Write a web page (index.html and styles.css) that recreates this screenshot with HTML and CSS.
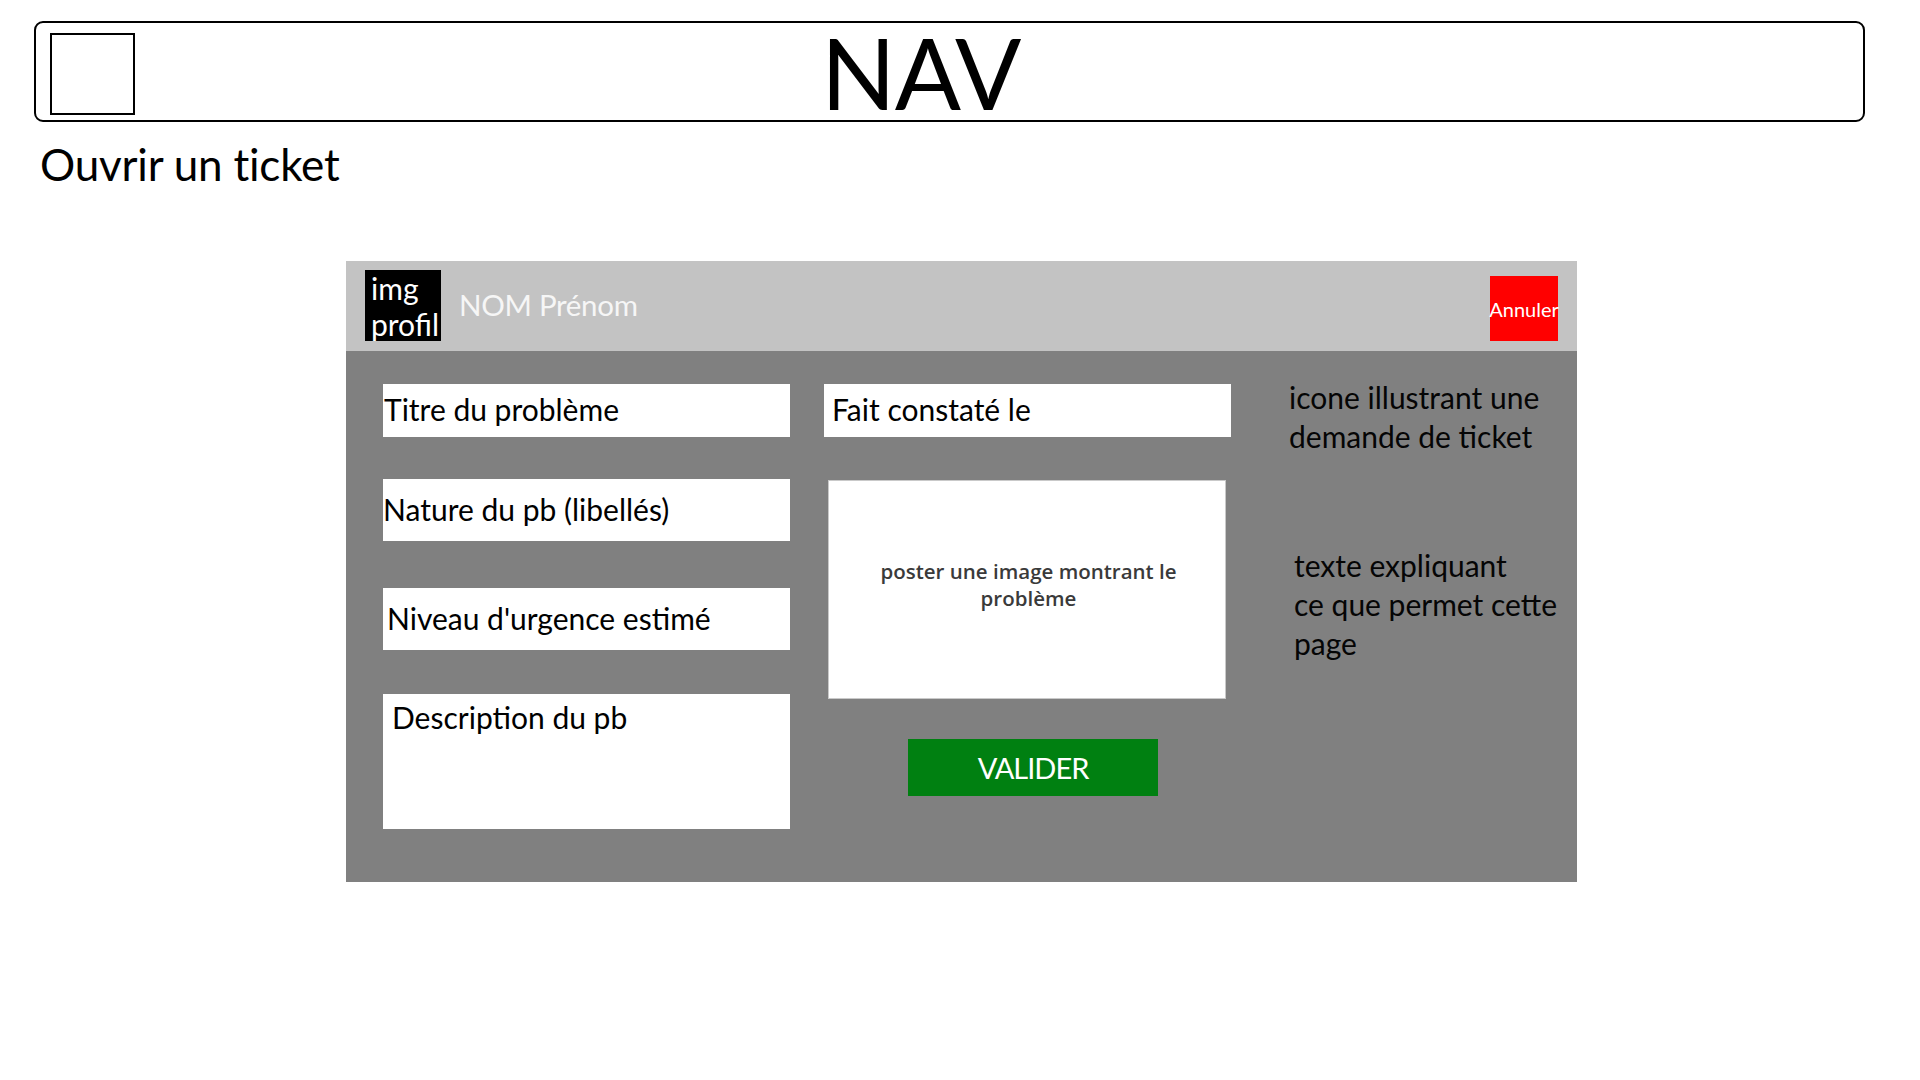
FILE: index.html
```html
<!DOCTYPE html>
<html lang="fr">
<head>
<meta charset="utf-8">
<title>Ouvrir un ticket</title>
<link rel="stylesheet" href="styles.css">
</head>
<body>
<div class="page">
  <header class="nav">
    <div class="nav-logo"></div>
    <div class="nav-title">NAV</div>
  </header>
  <h1 class="page-title">Ouvrir un ticket</h1>

  <section class="panel">
    <div class="panel-head">
      <div class="avatar">img<br>profil</div>
      <div class="user-name">NOM Prénom</div>
      <button class="btn-cancel">Annuler</button>
    </div>
    <div class="panel-body">
      <div class="col col-left">
        <div class="field field-title">Titre du problème</div>
        <div class="field field-nature">Nature du pb (libellés)</div>
        <div class="field field-urgency">Niveau d'urgence estimé</div>
        <div class="field field-desc">Description du pb</div>
      </div>
      <div class="col col-mid">
        <div class="field field-date">Fait constaté le</div>
        <div class="upload">poster une image montrant le<br>problème</div>
        <button class="btn-validate">VALIDER</button>
      </div>
      <div class="col col-right">
        <p class="note note-icon">icone illustrant une<br>demande de ticket</p>
        <p class="note note-text">texte expliquant<br>ce que permet cette<br>page</p>
      </div>
    </div>
  </section>
</div>
</body>
</html>
```

FILE: styles.css
```css
* { box-sizing: border-box; }

html, body {
  margin: 0;
  padding: 0;
  background: #ffffff;
}

body {
  font-family: Lato, "Open Sans", "Liberation Sans", sans-serif;
  color: #000;
}

.page {
  width: 1920px;
  height: 1080px;
  padding: 21px 55px 0 34px;
}

/* NAV */
.nav {
  height: 101px;
  border: 2px solid #000;
  border-radius: 9px;
  display: flex;
  align-items: flex-start;
  padding: 10px 0 0 14px;
}

.nav-logo {
  width: 85px;
  height: 82px;
  border: 2px solid #000;
  flex: none;
}

.nav-title {
  margin-left: 686px;
  margin-top: -10px;
  font-size: 98px;
  line-height: 98px;
  letter-spacing: -1px;
}

.page-title {
  margin: 16px 0 0 6px;
  font-size: 44px;
  font-weight: 400;
  line-height: 1.2;
  letter-spacing: -0.2px;
}

/* PANEL */
.panel {
  margin: 70px 0 0 312px;
  width: 1231px;
}

.panel-head {
  height: 90px;
  background: #c3c3c3;
  display: flex;
  align-items: center;
  padding: 0 19px 0 19px;
}

.avatar {
  width: 76px;
  height: 71px;
  background: #000;
  color: #fff;
  font-size: 30px;
  line-height: 36px;
  padding-left: 6px;
  white-space: nowrap;
  overflow: visible;
}

.user-name {
  margin-left: 18px;
  margin-top: -2px;
  font-size: 29.5px;
  letter-spacing: -0.3px;
  color: #f6f6f6;
}

.btn-cancel {
  margin-left: auto;
  margin-top: 6px;
  width: 68px;
  height: 65px;
  background: #ff0000;
  border: none;
  padding: 0;
  color: #fff;
  font-family: inherit;
  font-size: 20px;
  display: flex;
  align-items: center;
  justify-content: center;
  white-space: nowrap;
}

.panel-body {
  background: #808080;
  display: flex;
  gap: 34px;
  padding: 33px 0 53px 37px;
}

.col {
  display: flex;
  flex-direction: column;
  width: 407px;
}

.field {
  background: #fff;
  font-size: 30px;
  display: flex;
  align-items: center;
  white-space: nowrap;
  padding-bottom: 2px;
}

.field-title { height: 53px; padding-left: 1px; }
.field-nature { height: 62px; margin-top: 42px; padding-left: 0; }
.field-urgency { height: 62px; margin-top: 47px; padding-left: 4px; }
.field-desc {
  height: 135px;
  margin-top: 44px;
  align-items: flex-start;
  padding: 5px 0 0 9px;
  line-height: 36px;
}
.field-date { height: 53px; padding-left: 8px; }

.upload {
  margin: 43px 5px 0 4px;
  height: 219px;
  background: #fff;
  border: 1px solid #c9c9c9;
  display: flex;
  align-items: center;
  justify-content: center;
  text-align: center;
  font-family: "Open Sans", Lato, sans-serif;
  font-size: 20.5px;
  font-weight: 600;
  line-height: 27px;
  color: #3a3a3a;
  padding: 0 0 8px 3px;
}

.btn-validate {
  margin: 40px 0 0 84px;
  width: 250px;
  height: 57px;
  background: #008011;
  border: none;
  color: #fff;
  font-family: inherit;
  font-size: 29px;
  letter-spacing: -1px;
  padding: 0;
}

.col-right {
  width: auto;
  flex: 1;
  padding-left: 24px;
}

.note {
  margin: 0;
  font-size: 30px;
  line-height: 39px;
  color: #050505;
}

.note-icon { margin-top: -6px; }
.note-text { margin-top: 90px; margin-left: 5px; }
```
